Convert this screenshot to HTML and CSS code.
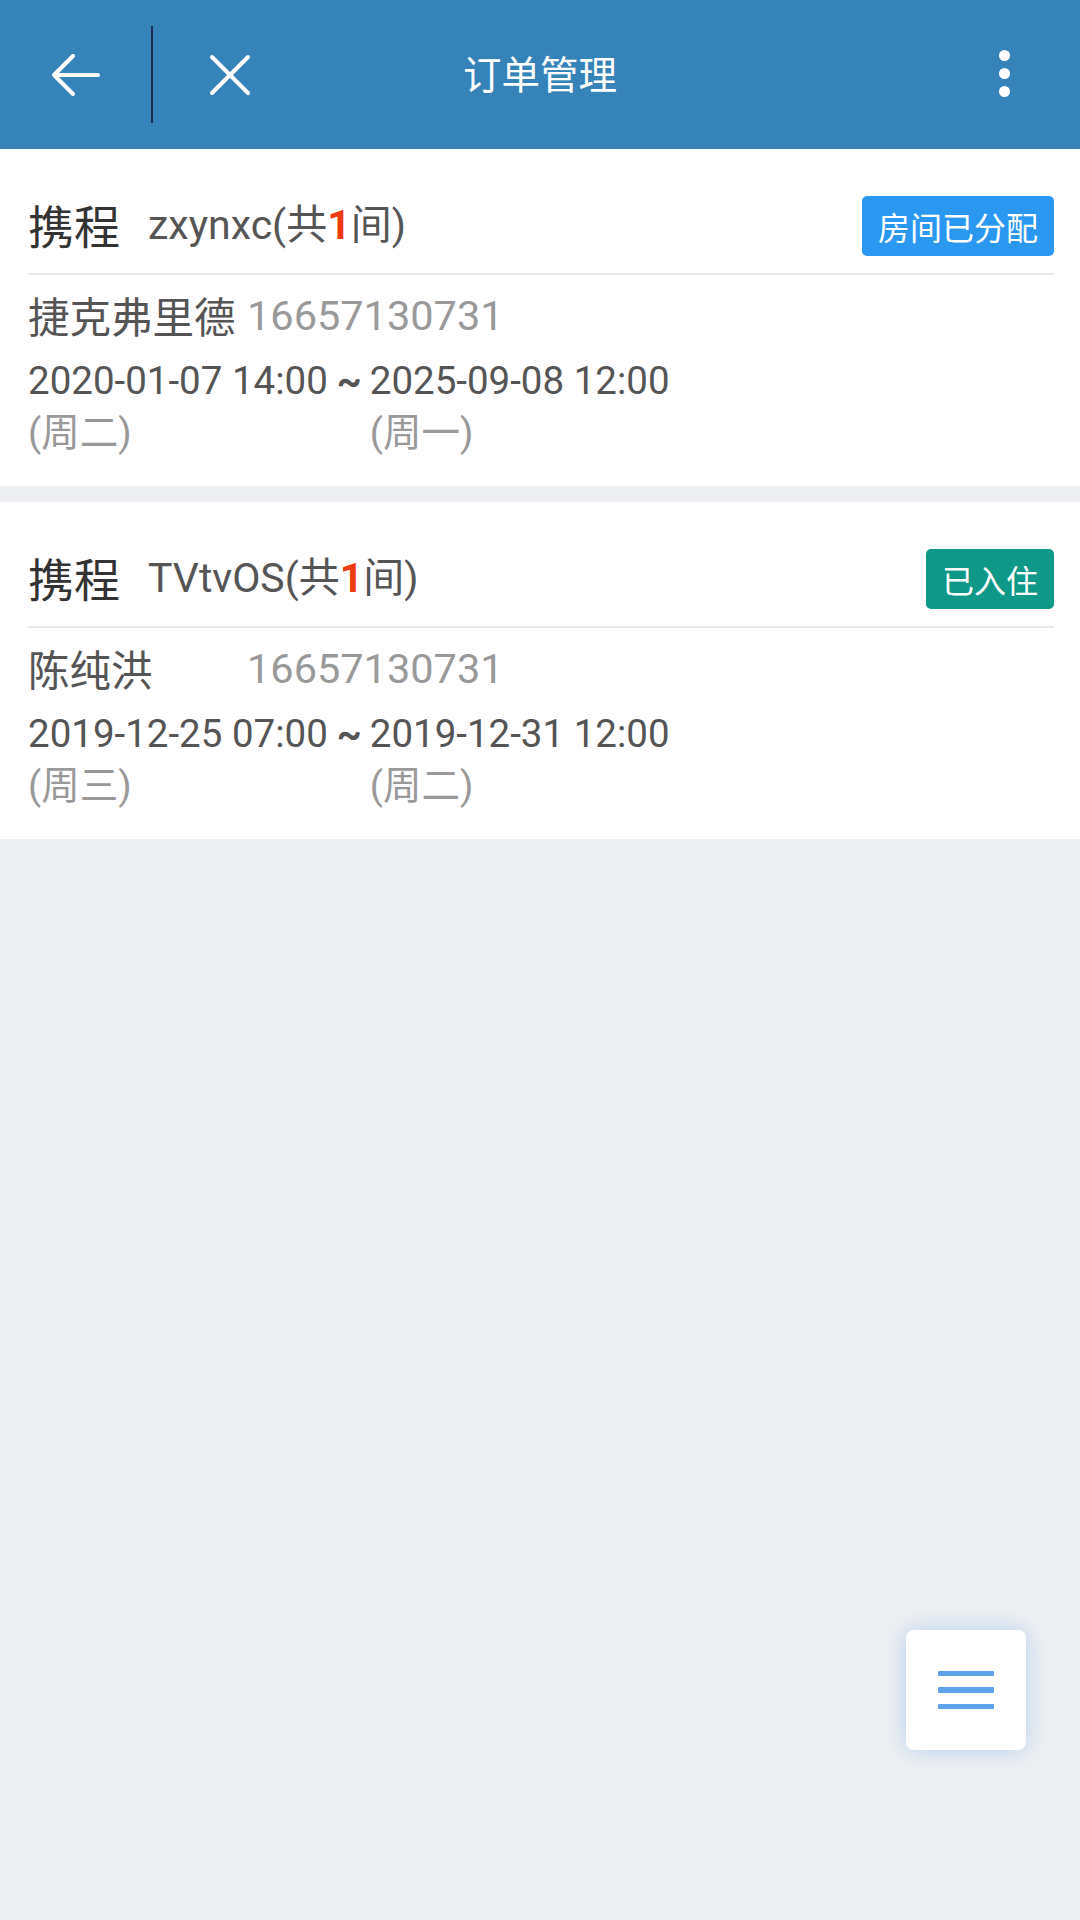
FILE: index.html
```html
<!DOCTYPE html>
<html lang="zh-CN">
<head>
<meta charset="utf-8">
<title>订单管理</title>
<link rel="stylesheet" href="styles.css">
</head>
<body>
<header class="topbar">
  <div class="topbar-left">
    <button class="icon-btn back" aria-label="返回">
      <svg width="50" height="42" viewBox="0 0 50 42"><path d="M4 21 H48 M23 2 L4 21 L23 40" fill="none" stroke="#fff" stroke-width="4" stroke-linecap="round" stroke-linejoin="round"/></svg>
    </button>
    <span class="vdivider"></span>
    <button class="icon-btn close" aria-label="关闭">
      <svg width="42" height="42" viewBox="0 0 42 42"><path d="M3 3 L39 39 M39 3 L3 39" fill="none" stroke="#fff" stroke-width="4" stroke-linecap="round"/></svg>
    </button>
  </div>
  <h1 class="topbar-title">订单管理</h1>
  <div class="topbar-right">
    <button class="icon-btn more" aria-label="更多">
      <span class="dot"></span><span class="dot"></span><span class="dot"></span>
    </button>
  </div>
</header>

<main class="list">
  <section class="card">
    <div class="card-head">
      <span class="source">携程</span>
      <span class="hotel">zxynxc(共<b class="count">1</b>间)</span>
      <span class="badge badge-blue">房间已分配</span>
    </div>
    <div class="card-body">
      <div class="guest"><span class="name">捷克弗里德</span><span class="phone">16657130731</span></div>
      <div class="dates">
        <div class="date-col"><div class="date">2020-01-07 14:00</div><div class="week">(周二)</div></div>
        <span class="tilde">~</span>
        <div class="date-col"><div class="date">2025-09-08 12:00</div><div class="week">(周一)</div></div>
      </div>
    </div>
  </section>

  <section class="card">
    <div class="card-head">
      <span class="source">携程</span>
      <span class="hotel">TVtvOS(共<b class="count">1</b>间)</span>
      <span class="badge badge-teal">已入住</span>
    </div>
    <div class="card-body">
      <div class="guest"><span class="name">陈纯洪</span><span class="phone">16657130731</span></div>
      <div class="dates">
        <div class="date-col"><div class="date">2019-12-25 07:00</div><div class="week">(周三)</div></div>
        <span class="tilde">~</span>
        <div class="date-col"><div class="date">2019-12-31 12:00</div><div class="week">(周二)</div></div>
      </div>
    </div>
  </section>
</main>

<button class="fab" aria-label="菜单">
  <span class="bar"></span><span class="bar"></span><span class="bar"></span>
</button>
</body>
</html>
```

FILE: styles.css
```css
* { box-sizing: border-box; }
html, body { margin: 0; padding: 0; }
body {
  width: 1080px;
  min-height: 1920px;
  background: #eeeff2;
  font-family: Roboto, "Noto Sans CJK SC", sans-serif;
  color: #555;
}
button { border: 0; background: none; padding: 0; margin: 0; cursor: pointer; font: inherit; }

.topbar {
  height: 149px;
  background: #3583b8;
  display: grid;
  grid-template-columns: 1fr auto 1fr;
  align-items: center;
}
.topbar-left { display: flex; align-items: center; height: 100%; }
.icon-btn { display: flex; align-items: center; justify-content: center; height: 100%; }
.back { width: 151px; }
.back svg { margin-right: 2px; }
.vdivider { width: 2px; height: 97px; background: #1b2c4f; align-self: center; }
.close { width: 153px; }
.topbar-title {
  margin: 0;
  color: #fff;
  font-family: "Noto Sans CJK SC", sans-serif;
  font-weight: 400;
  font-size: 38.5px;
  line-height: 1;
  padding-bottom: 4px;
}
.topbar-right { display: flex; justify-content: flex-end; height: 100%; }
.more { width: 152px; flex-direction: column; gap: 7px; padding-bottom: 2px; }
.dot { width: 11px; height: 11px; border-radius: 50%; background: #fff; display: block; }

.list { display: flex; flex-direction: column; gap: 16px; }
.card { background: #fff; }
.card-head {
  margin: 0 26px 0 28px;
  padding: 47px 0 17px;
  border-bottom: 2px solid #e8e8e8;
  display: flex;
  align-items: center;
  height: 126px;
}
.source { font-family: "Noto Sans CJK SC", sans-serif; font-size: 46px; color: #333; line-height: 60px; padding-bottom: 4px; }
.hotel { margin-left: 28px; font-size: 41px; color: #555; line-height: 60px; padding-bottom: 2px; }
.count { color: #ee3a10; font-weight: 700; }
.badge {
  margin-left: auto;
  height: 60px;
  line-height: 60px;
  padding: 0 16px;
  border-radius: 5px;
  color: #fff;
  font-family: "Noto Sans CJK SC", sans-serif;
  font-size: 32px;
}
.badge-blue { background: #2a98f1; }
.badge-teal { background: #0f9887; }

.card-body { padding: 12px 28px 27px; }
.guest { display: flex; align-items: center; height: 56px; font-size: 41.5px; }
.name { width: 219px; color: #555; flex: none; }
.phone { color: #999; }
.dates { display: flex; align-items: flex-start; margin-top: 12px; font-size: 38.5px; line-height: 52px; }
.date { color: #555; }
.week { color: #999; }
.tilde { color: #555; margin: 0 8px 0 9px; font-weight: 700; }

.fab {
  position: fixed;
  left: 906px;
  top: 1630px;
  width: 120px;
  height: 120px;
  background: #fff;
  border-radius: 8px;
  box-shadow: 0 0 22px rgba(110, 170, 235, 0.45);
  display: flex;
  flex-direction: column;
  align-items: center;
  justify-content: center;
  gap: 11px;
}
.bar { width: 56px; height: 5.5px; background: #5ea2ee; display: block; border-radius: 1px; }
```
